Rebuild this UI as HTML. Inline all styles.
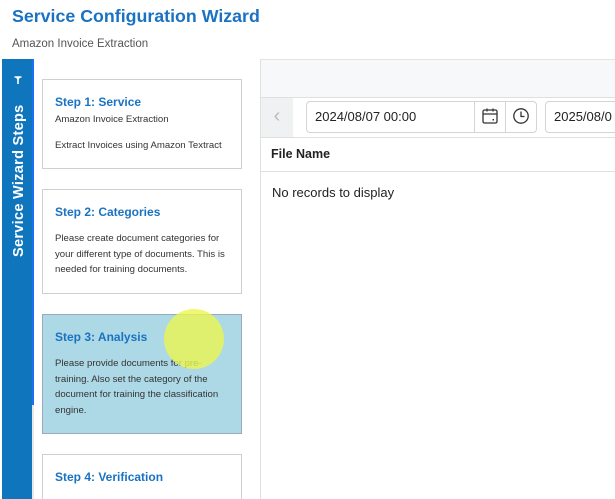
<!DOCTYPE html>
<html><head><style>
*{margin:0;padding:0;box-sizing:border-box}
html,body{width:615px;height:499px;overflow:hidden}
body{background:#fff;font-family:"Liberation Sans",sans-serif;position:relative}
.a{position:absolute}
h1{position:absolute;left:12px;top:6px;font-size:17.8px;font-weight:bold;color:#1a73c2;white-space:nowrap}
.sub{left:12px;top:38px;font-size:11.5px;color:#555}
.side{left:2px;top:59px;width:32px;height:440px;background:#0f75bd}
.strip{left:32px;top:59px;width:2px;height:346px;background:#1a6ff5}
.strip2{left:32px;top:405px;width:2px;height:94px;background:#e8e8e8}
.vt{left:11px;top:257px;transform-origin:0 0;transform:rotate(-90deg);color:#fff;font-weight:bold;font-size:14.5px;white-space:nowrap;letter-spacing:0.3px}
.card{position:absolute;left:42px;width:200px;border:1px solid #cfcfcf;background:#fff;padding:0 12px}
.card b{display:block;color:#1a73c2;font-size:12px;}
.card p{font-size:9.6px;color:#333;line-height:15.5px}
.main{left:260px;top:59px;width:355px;height:440px;border-left:1px solid #e0e0e0}
</style></head><body>
<h1>Service Configuration Wizard</h1>
<div class="a sub">Amazon Invoice Extraction</div>
<div class="a side"></div><div class="a strip"></div><div class="a strip2"></div>
<div class="a vt">Service Wizard Steps</div>
<svg class="a" style="left:13px;top:75px" width="10" height="10" viewBox="0 0 10 10"><path d="M1.5 2H8.5M5 2V9" stroke="#fff" stroke-width="1.6"/><path d="M2.5 2L5 5.5L7.5 2Z" fill="#fff"/></svg>
<div class="card" style="top:79px;height:90px"><b style="margin-top:15px">Step 1: Service</b><p style="margin-top:3px">Amazon Invoice Extraction</p><p style="margin-top:10px">Extract Invoices using Amazon Textract</p></div>
<div class="card" style="top:189px;height:105px"><b style="margin-top:15px">Step 2: Categories</b><p style="margin-top:12px">Please create document categories for your different type of documents. This is needed for training documents.</p></div>
<div class="card" style="top:314px;height:120px;background:#add8e6;border-color:#9ab"><b style="margin-top:15px">Step 3: Analysis</b><p style="margin-top:12px">Please provide documents for pre-training. Also set the category of the document for training the classification engine.</p></div>
<div class="a" style="left:164px;top:309px;width:60px;height:60px;border-radius:50%;background:rgba(235,245,80,.8)"></div>
<div class="card" style="top:454px;height:60px"><b style="margin-top:15px">Step 4: Verification</b></div>
<div class="a main">
 <div class="a" style="left:0;top:0;width:355px;height:39px;background:#f7f8fa;border-top:1px solid #e3e3e3;border-bottom:1px solid #e0e0e0"></div>
 <div class="a" style="left:0;top:39px;width:32px;height:39px;background:#f0f1f3;color:#bbb;font-size:20px;text-align:center;line-height:37px">&#8249;</div>
 <div class="a" style="left:45px;top:42px;width:231px;height:32px;border:1px solid #d4d4d4;border-radius:4px"></div>
 <div class="a" style="left:54px;top:50px;font-size:13px;color:#222">2024/08/07 00:00</div>
 <div class="a" style="left:213px;top:42px;width:1px;height:32px;background:#d4d4d4"></div>
 <div class="a" style="left:244px;top:42px;width:1px;height:32px;background:#d4d4d4"></div>
 <svg class="a" style="left:220px;top:48px" width="18" height="18" viewBox="0 0 18 18" fill="none" stroke="#333" stroke-width="1.3"><rect x="2" y="3" width="14" height="13" rx="1.5"/><path d="M2 7h14M6 1.5v3M12 1.5v3"/><rect x="11.5" y="12" width="1.5" height="1.5" fill="#333" stroke="none"/></svg>
 <svg class="a" style="left:251px;top:48px" width="18" height="18" viewBox="0 0 18 18" fill="none" stroke="#333" stroke-width="1.3"><circle cx="9" cy="9" r="7.2"/><path d="M9 4.5V9.5H12.5"/></svg>
 <div class="a" style="left:284px;top:42px;width:90px;height:32px;border:1px solid #d4d4d4;border-radius:4px"></div>
 <div class="a" style="left:293px;top:50px;font-size:13px;color:#222;white-space:nowrap">2025/08/0</div>
 <div class="a" style="left:0;top:78px;width:355px;height:1px;background:#e0e0e0"></div>
 <div class="a" style="left:10px;top:88px;font-size:12.5px;font-weight:bold;color:#222">File Name</div>
 <div class="a" style="left:0;top:112px;width:355px;height:1px;background:#e0e0e0"></div>
 <div class="a" style="left:11px;top:126px;font-size:13px;color:#222">No records to display</div>
</div>
</body></html>
